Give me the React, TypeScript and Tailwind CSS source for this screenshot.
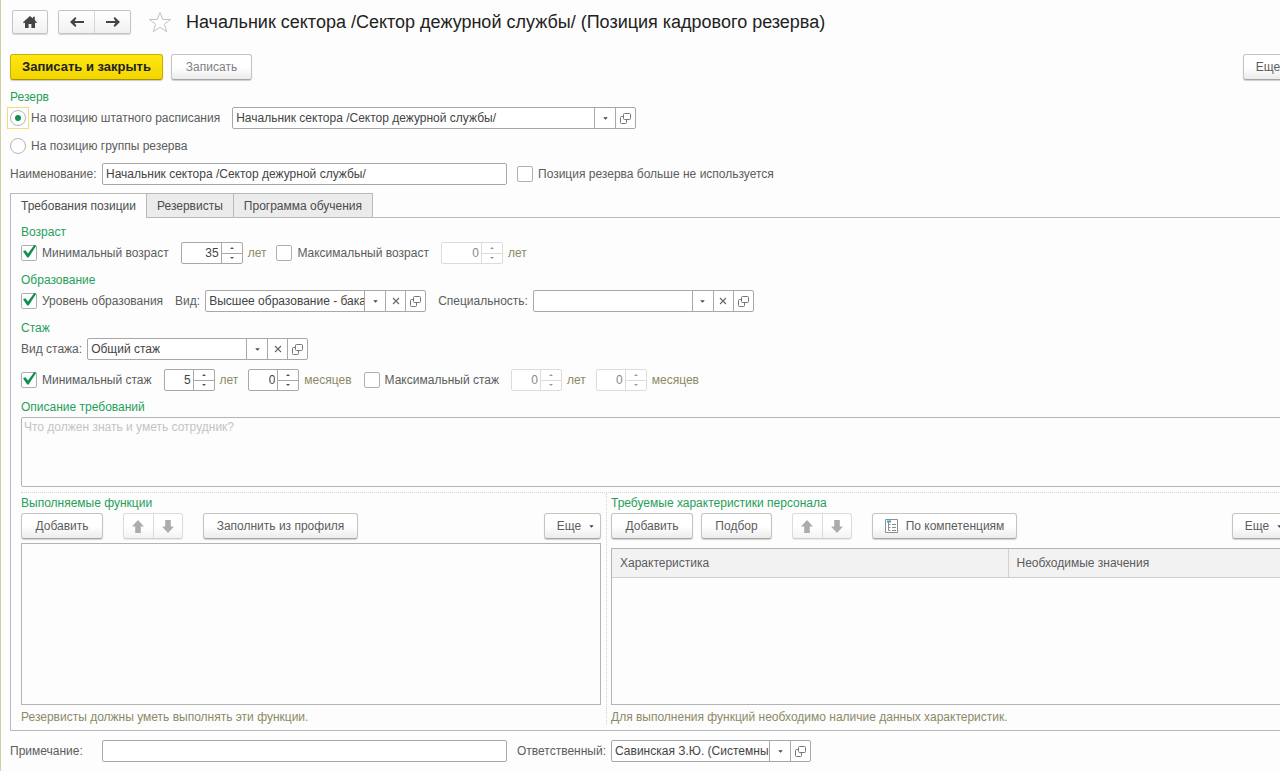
import { useState, type ReactNode } from 'react';
import clsx from 'clsx';

const tabs = ['Требования позиции', 'Резервисты', 'Программа обучения'];

const buttonBase =
  'flex h-[26px] shrink-0 items-center justify-center rounded-[3px] border border-[#c4c4c4] border-b-[#a6a6a6] bg-linear-to-b from-white from-50% to-[#ececec] shadow-[0_1px_1px_rgba(0,0,0,0.18)]';

function Button({ children, className }: { children: ReactNode; className?: string }) {
  return (
    <button type="button" className={clsx(buttonBase, className)}>
      {children}
    </button>
  );
}

function Caret() {
  return (
    <svg aria-hidden="true" viewBox="0 0 6 4" className="h-[3px] w-[5px]" fill="#444">
      <path d="M0 .3h6L3 3.7z" />
    </svg>
  );
}

function MoreButton() {
  return (
    <Button className="w-[57px] gap-2 pl-1.5">
      Еще
      <Caret />
    </Button>
  );
}

function Cross() {
  return (
    <svg aria-hidden="true" viewBox="0 0 8 8" className="h-2 w-2" stroke="#666" strokeWidth="1.1">
      <path d="M1 1l6 6M7 1L1 7" />
    </svg>
  );
}

function OpenIcon() {
  return (
    <svg aria-hidden="true" viewBox="0 0 11 11" className="h-[11px] w-[11px]" fill="none" stroke="#777">
      <path d="M3.5 1.5q0-1 1-1h5q1 0 1 1v4q0 1-1 1h-5q-1 0-1-1z" />
      <path d="M3.2 3.5H1.5q-1 0-1 1v5q0 1 1 1h4q1 0 1-1V7" />
    </svg>
  );
}

function MoveButtons() {
  return (
    <div className="flex h-[26px] w-[60px] rounded-[3px] border border-[#dcdcdc] border-b-[#cfcfcf] bg-linear-to-b from-white from-50% to-[#f3f3f3] shadow-[0_1px_1px_rgba(0,0,0,0.08)]">
      <button type="button" disabled aria-label="Вверх" className="grid flex-1 place-items-center border-r border-[#dcdcdc]">
        <svg aria-hidden="true" viewBox="0 0 12 13" className="h-[13px] w-3" fill="#a9adb0">
          <path d="M6 0l6 6.5H8.8V13H3.2V6.5H0z" />
        </svg>
      </button>
      <button type="button" disabled aria-label="Вниз" className="grid flex-1 place-items-center">
        <svg aria-hidden="true" viewBox="0 0 12 13" className="h-[13px] w-3" fill="#a9adb0">
          <path d="M6 13l6-6.5H8.8V0H3.2v6.5H0z" />
        </svg>
      </button>
    </div>
  );
}

type ComboProps = { id?: string; label?: string; value?: string; clearable?: boolean; className: string };

function Combo({ id, label, value = '', clearable, className }: ComboProps) {
  return (
    <div className={clsx('flex h-[22px] rounded-[2px] border border-[#a8a8a8] bg-white', className)}>
      <input id={id} aria-label={label} defaultValue={value} className="w-0 min-w-0 flex-1 pl-[3px] text-[#444] outline-none" />
      <button type="button" aria-label="Выбрать" className="grid w-[21px] place-items-center border-l border-[#a8a8a8]">
        <Caret />
      </button>
      {clearable && (
        <button type="button" aria-label="Очистить" className="grid w-5 place-items-center border-l border-[#a8a8a8]">
          <Cross />
        </button>
      )}
      <button type="button" aria-label="Открыть" className="grid w-5 place-items-center border-l border-[#a8a8a8]">
        <OpenIcon />
      </button>
    </div>
  );
}

type SpinnerProps = { label: string; value: string; disabled?: boolean; className: string };

function Spinner({ label, value, disabled, className }: SpinnerProps) {
  const line = disabled ? 'border-[#dcdcdc]' : 'border-[#a8a8a8]';
  const arrow = disabled ? '#999' : '#555';

  return (
    <div className={clsx('flex h-[22px] rounded-[2px] border bg-white', line, className)}>
      <input
        aria-label={label}
        defaultValue={value}
        disabled={disabled}
        className={clsx('w-0 min-w-0 flex-1 pr-0.5 text-right outline-none', disabled ? 'text-[#888]' : 'text-[#444]')}
      />
      <div className={clsx('flex w-[21px] flex-col border-l', line)}>
        <button type="button" disabled={disabled} aria-label="Больше" className={clsx('grid flex-1 place-items-center border-b', line)}>
          <svg aria-hidden="true" viewBox="0 0 4 2" className="h-0.5 w-1" fill={arrow}>
            <path d="M0 2h4L2 0z" />
          </svg>
        </button>
        <button type="button" disabled={disabled} aria-label="Меньше" className="grid flex-1 place-items-center">
          <svg aria-hidden="true" viewBox="0 0 4 2" className="h-0.5 w-1" fill={arrow}>
            <path d="M0 0h4L2 2z" />
          </svg>
        </button>
      </div>
    </div>
  );
}

function Check({ label, checked, className }: { label: string; checked?: boolean; className?: string }) {
  return (
    <label className={clsx('flex items-center gap-[5px] whitespace-nowrap', className)}>
      <span className="relative h-4 w-4">
        <input
          type="checkbox"
          defaultChecked={checked}
          className="peer block h-4 w-4 appearance-none rounded-[2px] border border-[#b0b0b0] bg-white"
        />
        <svg
          aria-hidden="true"
          viewBox="0 0 16 16"
          className="pointer-events-none absolute inset-0 hidden overflow-visible peer-checked:block"
          fill="#0f9150"
        >
          <path d="M2 6.2l2.4-1 2.6 3.4L13.4-.2l1.8.9L7.6 12.6H6.2z" />
        </svg>
      </span>
      {label}
    </label>
  );
}

function Radio({ label, checked }: { label: string; checked?: boolean }) {
  return (
    <label className="flex h-4 items-center gap-[5px] whitespace-nowrap">
      <span className="outline-offset-2 has-checked:outline has-checked:outline-[#f3dc7c]">
        <input
          type="radio"
          name="reserve"
          defaultChecked={checked}
          className="grid h-4 w-4 appearance-none place-items-center rounded-full border border-[#b4b4b4] bg-white before:h-1.5 before:w-1.5 before:rounded-full checked:before:bg-[#0f9150]"
        />
      </span>
      {label}
    </label>
  );
}

function Heading({ children }: { children: ReactNode }) {
  return <h2 className="h-4 text-[#25a05a]">{children}</h2>;
}

function Unit({ children }: { children: ReactNode }) {
  return <span className="ml-[5px] text-[#8c8a66]">{children}</span>;
}

export default function App() {
  const [tab, setTab] = useState(0);

  return (
    <div className="min-h-screen overflow-hidden border-l border-[#cfd0a4] bg-[#fdfdfd] font-['Liberation_Sans',Arial,sans-serif] text-xs leading-4 text-[#5c5c5c]">
      {/* the form runs a little past the right edge of the window */}
      <main className="w-[calc(100%+20px)] pb-2 pl-[9px] pt-2.5">
        <header className="flex h-6 items-center pl-0.5">
          <button type="button" aria-label="Домой" className="grid h-6 w-9 place-items-center rounded-[2px] border border-[#c4c4c4] bg-linear-to-b from-white to-[#f1f1f1] shadow-[0_1px_1px_rgba(0,0,0,0.15)]">
            <svg aria-hidden="true" viewBox="0 0 14 12" className="h-3 w-3.5" fill="#444">
              <path d="M7 0L0 6.2l1 1.1 1-.9V12h3.6V8h2.8v4H12V6.4l1 .9 1-1.1-2.2-2V.8H10v1.8z" />
            </svg>
          </button>
          <div className="ml-2.5 flex h-6 w-[73px] rounded-[2px] border border-[#c4c4c4] bg-linear-to-b from-white to-[#f1f1f1] shadow-[0_1px_1px_rgba(0,0,0,0.15)]">
            <button type="button" aria-label="Назад" className="grid flex-1 place-items-center border-r border-[#d6d6d6]">
              <svg aria-hidden="true" viewBox="0 0 14 10" className="h-2.5 w-3.5" fill="#444">
                <path d="M0 5L5.2 0l1.2 1.2L4.6 3.9H14v2.2H4.6l1.8 2.7L5.2 10z" />
              </svg>
            </button>
            <button type="button" aria-label="Вперед" className="grid flex-1 place-items-center">
              <svg aria-hidden="true" viewBox="0 0 14 10" className="h-2.5 w-3.5" fill="#444">
                <path d="M14 5L8.8 0 7.6 1.2l1.8 2.7H0v2.2h9.4L7.6 8.8 8.8 10z" />
              </svg>
            </button>
          </div>
          <button type="button" aria-label="В избранное" className="ml-[17px]">
            <svg aria-hidden="true" viewBox="0 0 24 22" className="h-[22px] w-6" fill="#fff" stroke="#c3c3c3">
              <path d="M12 1.5l2.7 7h8l-6.4 4.7 2.4 7.6L12 16.2l-6.7 4.6 2.4-7.6L1.3 8.5h8z" />
            </svg>
          </button>
          <h1 className="ml-3.5 whitespace-nowrap text-[18px] leading-6 text-[#222]">
            Начальник сектора /Сектор дежурной службы/ (Позиция кадрового резерва)
          </h1>
        </header>

        <div className="mt-5 flex gap-2">
          <button type="button" className="h-[26px] w-[153px] rounded-[3px] border border-[#c9ae00] border-b-[#a89200] bg-linear-to-b from-[#ffe712] to-[#f2d600] text-[13px] font-bold text-[#222] shadow-[0_1px_1px_rgba(0,0,0,0.2)]">
            Записать и закрыть
          </button>
          <Button className="w-[81px] text-[#808080]">Записать</Button>
          <div className="ml-auto">
            <MoreButton />
          </div>
        </div>

        <div className="mt-[9px]">
          <Heading>Резерв</Heading>
        </div>
        <div className="mt-0.5 flex items-center gap-3">
          <Radio label="На позицию штатного расписания" checked />
          <Combo label="Позиция штатного расписания" value="Начальник сектора /Сектор дежурной службы/" className="w-[404px]" />
        </div>
        <div className="mt-[9px]">
          <Radio label="На позицию группы резерва" />
        </div>
        <div className="mt-[9px] flex items-center">
          <label htmlFor="name" className="w-[92px]">
            Наименование:
          </label>
          <input
            id="name"
            defaultValue="Начальник сектора /Сектор дежурной службы/"
            className="h-[22px] w-[405px] rounded-[2px] border border-[#a8a8a8] bg-white pl-[3px] text-[#444] outline-none"
          />
          <Check label="Позиция резерва больше не используется" className="ml-2.5" />
        </div>

        <div role="tablist" className="relative mt-2 flex h-[25px]">
          {tabs.map((title, index) => (
            <button
              key={title}
              type="button"
              role="tab"
              aria-selected={tab === index}
              onClick={() => setTab(index)}
              className={clsx(
                'border-t border-r border-[#b9b9b9] px-2.5 text-[#4c4c4c] first:border-l',
                tab === index ? 'bg-[#fdfdfd]' : 'border-b bg-[#ebebeb]'
              )}
            >
              {title}
            </button>
          ))}
        </div>

        <section className="-mt-px border border-[#b9b9b9] px-2.5 pb-[5px] pt-1.5">
          <Heading>Возраст</Heading>
          <div className="mt-0.5 flex items-center">
            <Check label="Минимальный возраст" checked />
            <Spinner label="Минимальный возраст, лет" value="35" className="ml-3 w-[62px]" />
            <Unit>лет</Unit>
            <Check label="Максимальный возраст" className="ml-2.5" />
            <Spinner label="Максимальный возраст, лет" value="0" disabled className="ml-3 w-[62px]" />
            <Unit>лет</Unit>
          </div>

          <div className="mt-2">
            <Heading>Образование</Heading>
          </div>
          <div className="mt-0.5 flex items-center">
            <Check label="Уровень образования" checked />
            <label htmlFor="level" className="ml-3 mr-[5px]">
              Вид:
            </label>
            <Combo id="level" value="Высшее образование - бакалавриат" clearable className="w-[221px]" />
            <label htmlFor="speciality" className="ml-3 mr-[5px]">
              Специальность:
            </label>
            <Combo id="speciality" clearable className="w-[221px]" />
          </div>

          <div className="mt-2">
            <Heading>Стаж</Heading>
          </div>
          <div className="mt-0.5 flex items-center">
            <label htmlFor="experience" className="mr-[5px]">
              Вид стажа:
            </label>
            <Combo id="experience" value="Общий стаж" clearable className="w-[221px]" />
          </div>
          <div className="mt-[9px] flex items-center">
            <Check label="Минимальный стаж" checked />
            <Spinner label="Минимальный стаж, лет" value="5" className="ml-3 w-[51px]" />
            <Unit>лет</Unit>
            <Spinner label="Минимальный стаж, месяцев" value="0" className="ml-2.5 w-[51px]" />
            <Unit>месяцев</Unit>
            <Check label="Максимальный стаж" className="ml-3" />
            <Spinner label="Максимальный стаж, лет" value="0" disabled className="ml-3 w-[51px]" />
            <Unit>лет</Unit>
            <Spinner label="Максимальный стаж, месяцев" value="0" disabled className="ml-2.5 w-[51px]" />
            <Unit>месяцев</Unit>
          </div>

          <div className="mt-2">
            <Heading>Описание требований</Heading>
          </div>
          <textarea
            aria-label="Описание требований"
            placeholder="Что должен знать и уметь сотрудник?"
            className="mt-0.5 block h-[70px] w-full resize-none rounded-[2px] border border-[#b4b4b4] px-0.5 py-px outline-none placeholder:text-[#c4c4c4]"
          />

          <div className="mt-[5px] grid grid-cols-[minmax(0,580fr)_10px_minmax(0,678fr)] border-t border-dotted border-[#d4d4d4]">
            <div className="flex flex-col pt-0.5">
              <Heading>Выполняемые функции</Heading>
              <div className="mt-0.5 flex items-center gap-5">
                <Button className="w-[82px]">Добавить</Button>
                <MoveButtons />
                <Button className="w-[155px]">Заполнить из профиля</Button>
                <div className="ml-auto">
                  <MoreButton />
                </div>
              </div>
              <textarea
                aria-label="Выполняемые функции"
                className="mt-1 block h-[162px] resize-none border border-[#b4b4b4] outline-none"
              />
              <p className="mt-1 text-[#8c8a66]">Резервисты должны уметь выполнять эти функции.</p>
            </div>

            <div className="mx-auto w-0 border-l border-dotted border-[#d4d4d4]" />

            <div className="flex flex-col pt-0.5">
              <Heading>Требуемые характеристики персонала</Heading>
              <div className="mt-0.5 flex items-center gap-5">
                <div className="flex gap-2">
                  <Button className="w-[82px]">Добавить</Button>
                  <Button className="w-[71px]">Подбор</Button>
                </div>
                <MoveButtons />
                <Button className="w-[145px] gap-2">
                  <svg aria-hidden="true" viewBox="0 0 13 14" className="h-3.5 w-[13px]" fill="none" stroke="#8b8f92">
                    <path d="M.5.5h12v13H.5z" fill="#fff" />
                    <path d="M3.5 3v8.5M3.5 5.5h2M3.5 8.5h2M3.5 11.5h2M7 5.5h4M7 8.5h4M7 11.5h4" />
                    <path d="M2 2.5h4" stroke="#3f9fc8" strokeWidth="2" />
                  </svg>
                  По компетенциям
                </Button>
                <div className="ml-auto">
                  <MoreButton />
                </div>
              </div>
              <div className="mt-[9px] h-[157px] border border-[#b4b4b4]">
                <table className="w-full table-fixed border-collapse bg-[#f2f2f2] text-left">
                  <thead>
                    <tr className="h-7 border-b border-[#d0d0d0]">
                      <th className="w-[396px] border-r border-[#d0d0d0] px-2 font-normal">Характеристика</th>
                      <th className="px-2 font-normal">Необходимые значения</th>
                    </tr>
                  </thead>
                </table>
              </div>
              <p className="mt-1 text-[#8c8a66]">Для выполнения функций необходимо наличие данных характеристик.</p>
            </div>
          </div>
        </section>

        <footer className="mt-[9px] flex items-center">
          <label htmlFor="note" className="w-[92px]">
            Примечание:
          </label>
          <input id="note" className="h-[22px] w-[405px] rounded-[2px] border border-[#a8a8a8] bg-white pl-[3px] outline-none" />
          <label htmlFor="responsible" className="ml-2.5 mr-[5px]">
            Ответственный:
          </label>
          <Combo id="responsible" value="Савинская З.Ю. (Системный администратор)" className="w-[200px]" />
        </footer>
      </main>
    </div>
  );
}
